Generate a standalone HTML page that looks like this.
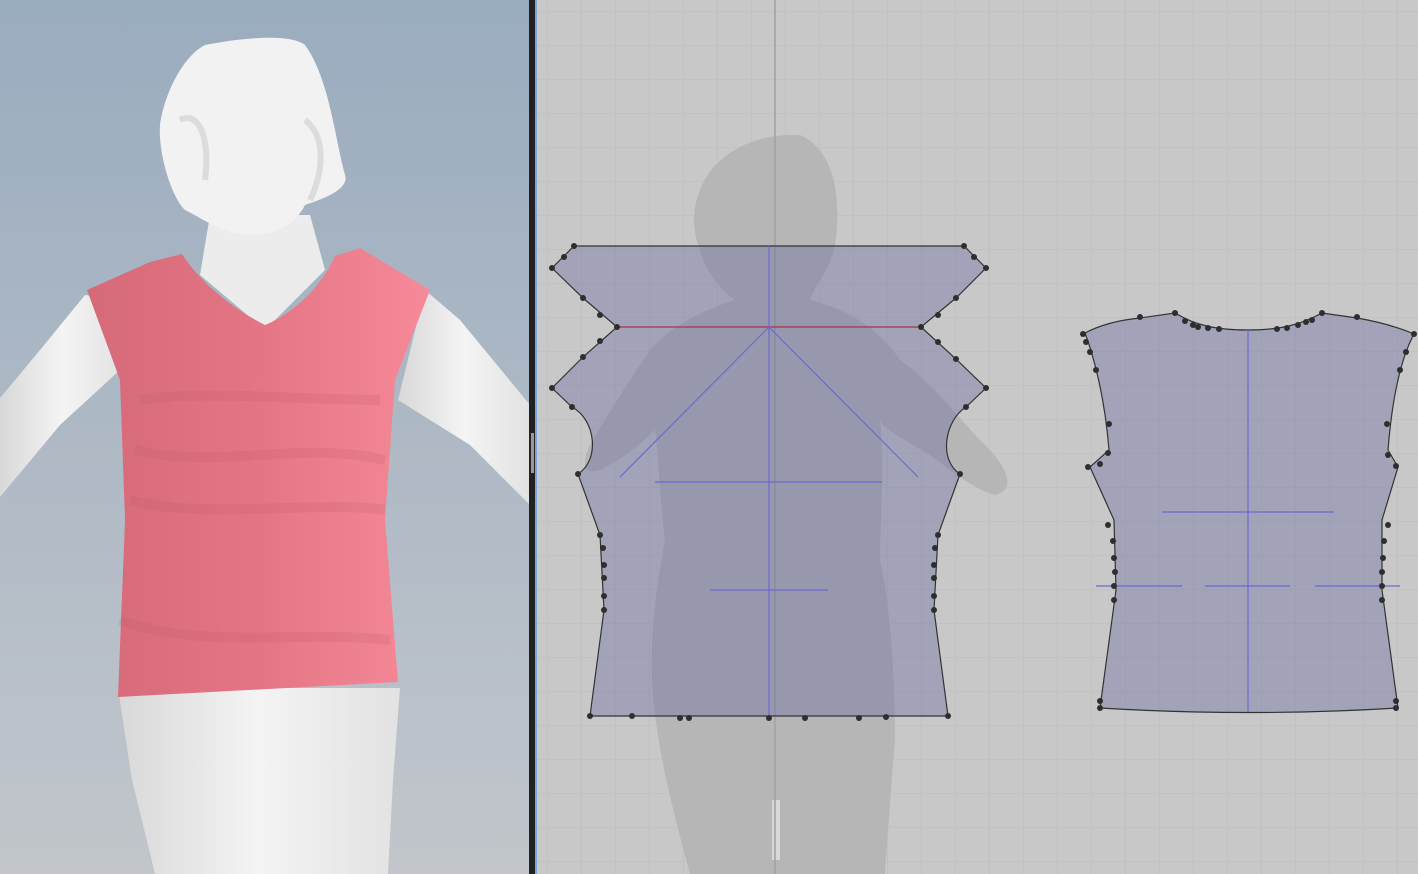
<!DOCTYPE html>
<html><head><meta charset="utf-8"><style>
html,body{margin:0;padding:0;width:1418px;height:874px;overflow:hidden;background:#c8c8c8}
svg{display:block}
</style></head><body>
<svg width="1418" height="874" viewBox="0 0 1418 874" xmlns="http://www.w3.org/2000/svg">
<defs>
<linearGradient id="bg" x1="0" y1="0" x2="0" y2="1"><stop offset="0" stop-color="#9aacbf"/><stop offset="1" stop-color="#c2c6cb"/></linearGradient>
<linearGradient id="shirt" x1="0" y1="0" x2="1" y2="0"><stop offset="0" stop-color="#d56a78"/><stop offset="0.5" stop-color="#e47584"/><stop offset="1" stop-color="#f68a99"/></linearGradient>
<linearGradient id="skin" x1="0" y1="0" x2="1" y2="0"><stop offset="0" stop-color="#d8d8d8"/><stop offset="0.5" stop-color="#f4f4f4"/><stop offset="1" stop-color="#e2e2e2"/></linearGradient>
<pattern id="grid" x="3" y="11" width="34" height="34" patternUnits="userSpaceOnUse"><path d="M0 0H34M0 0V34" stroke="#bdbdbd" stroke-width="1.3" fill="none"/></pattern>
</defs>
<rect x="0" y="0" width="530" height="874" fill="url(#bg)"/>
<path d="M85,295 L125,300 L120,370 L60,425 L0,497 L0,398 L40,350Z" fill="url(#skin)"/>
<path d="M425,290 L460,320 L530,405 L530,505 L470,445 L398,400Z" fill="url(#skin)"/>
<path d="M118,688 L400,688 L393,780 L388,874 L155,874 L132,780Z" fill="url(#skin)"/>
<path d="M210,215 L310,215 L325,270 L265,330 L200,275Z" fill="#ececec"/>
<path d="M205,45 C240,38 290,33 305,45 C330,80 335,140 345,175 C350,190 320,200 305,205 C295,225 275,235 250,235 C225,235 205,220 185,210 C170,195 158,150 160,125 C165,90 185,55 205,45Z" fill="#f2f2f2"/>
<path d="M180,120 C200,110 210,140 205,180 M305,120 C330,140 320,180 310,200" stroke="#dcdcdc" stroke-width="6" fill="none"/>
<path d="M87,290 L150,262 L182,254 C195,275 225,305 265,325 C290,315 320,290 335,256 L360,248 L430,290 L395,380 L385,520 L398,682 L118,697 L125,520 L120,380Z" fill="url(#shirt)"/>
<path d="M140,400 C200,390 300,400 380,400 M135,450 C220,470 300,440 385,460 M130,500 C200,520 320,500 385,510 M120,620 C200,650 300,630 390,640" stroke="#c05a68" stroke-width="10" fill="none" opacity="0.2"/>
<rect x="529" y="0" width="6" height="874" fill="#222"/>
<rect x="535" y="0" width="2" height="874" fill="#7aa6d6"/>
<rect x="531" y="433" width="3" height="40" fill="#999"/>
<rect x="537" y="0" width="881" height="874" fill="#c8c8c8"/>
<rect x="537" y="0" width="881" height="874" fill="url(#grid)"/>
<path d="M700,190 C715,150 760,133 800,135 C835,150 842,200 835,245 C830,270 815,285 810,300 C850,310 880,330 900,360 C930,380 960,420 985,445 C1010,470 1015,490 995,495 C975,490 950,470 930,455 C905,440 885,430 880,420 C885,470 880,520 880,560 C890,600 895,680 895,740 C890,800 885,874 885,874 L690,874 C670,800 655,740 652,680 C650,620 660,570 665,540 C660,500 658,450 655,430 C640,445 620,460 600,470 C585,475 580,465 590,445 C610,410 630,380 650,350 C675,320 720,305 735,300 C720,290 705,270 700,250 C692,230 692,210 700,190Z" fill="#b6b6b6"/>
<rect x="772" y="800" width="8" height="60" fill="#d8d8d8"/>
<line x1="775" y1="0" x2="775" y2="874" stroke="#a0a0a0" stroke-width="1.5"/>
<path d="M574,246 L964,246 L986,268 L956,298 L921,327 L956,359 L986,388 L966,407 C945,420 938,460 960,474 L938,535 L934,610 L948,716 L590,716 L604,610 L600,535 L578,474 C600,460 596,420 572,407 L552,388 L583,357 L617,327 L583,298 L552,268Z" fill="rgba(105,105,160,0.4)" stroke="#333" stroke-width="1.2"/>
<line x1="617" y1="327" x2="921" y2="327" stroke="#b0304a" stroke-width="1.2"/>
<g stroke="#6a6ad0" stroke-width="1.2" fill="none">
<line x1="769" y1="246" x2="769" y2="716"/>
<line x1="769" y1="327" x2="620" y2="477"/>
<line x1="769" y1="327" x2="918" y2="477"/>
<line x1="655" y1="482" x2="882" y2="482"/>
<line x1="710" y1="590" x2="828" y2="590"/>
</g>
<path d="M1085,333 C1100,325 1120,320 1140,318 L1175,313 C1195,325 1215,330 1248,330 C1280,330 1300,325 1322,313 L1357,318 C1380,322 1400,328 1414,334 C1400,360 1392,400 1388,450 L1398,467 L1382,520 L1382,590 L1398,708 C1300,714 1200,714 1100,708 L1116,590 L1114,520 L1090,467 L1109,450 C1105,400 1095,360 1085,333Z" fill="rgba(105,105,160,0.4)" stroke="#333" stroke-width="1.2"/>
<g stroke="#6a6ad0" stroke-width="1.2" fill="none">
<line x1="1248" y1="330" x2="1248" y2="712"/>
<line x1="1162" y1="512" x2="1334" y2="512"/>
<line x1="1096" y1="586" x2="1182" y2="586"/>
<line x1="1205" y1="586" x2="1290" y2="586"/>
<line x1="1315" y1="586" x2="1400" y2="586"/>
</g>
<g fill="#2e2e2e">
<circle cx="574" cy="246" r="3"/><circle cx="564" cy="257" r="3"/><circle cx="552" cy="268" r="3"/><circle cx="583" cy="298" r="3"/><circle cx="600" cy="315" r="3"/><circle cx="617" cy="327" r="3"/><circle cx="600" cy="341" r="3"/><circle cx="583" cy="357" r="3"/><circle cx="552" cy="388" r="3"/><circle cx="572" cy="407" r="3"/><circle cx="578" cy="474" r="3"/>
<circle cx="600" cy="535" r="3"/><circle cx="603" cy="548" r="3"/><circle cx="604" cy="565" r="3"/><circle cx="604" cy="578" r="3"/><circle cx="604" cy="596" r="3"/><circle cx="604" cy="610" r="3"/><circle cx="590" cy="716" r="3"/><circle cx="632" cy="716" r="3"/><circle cx="680" cy="718" r="3"/><circle cx="689" cy="718" r="3"/><circle cx="769" cy="718" r="3"/><circle cx="805" cy="718" r="3"/><circle cx="859" cy="718" r="3"/><circle cx="886" cy="717" r="3"/><circle cx="948" cy="716" r="3"/>
<circle cx="964" cy="246" r="3"/><circle cx="974" cy="257" r="3"/><circle cx="986" cy="268" r="3"/><circle cx="956" cy="298" r="3"/><circle cx="938" cy="315" r="3"/><circle cx="921" cy="327" r="3"/><circle cx="938" cy="342" r="3"/><circle cx="956" cy="359" r="3"/><circle cx="986" cy="388" r="3"/><circle cx="966" cy="407" r="3"/><circle cx="960" cy="474" r="3"/>
<circle cx="938" cy="535" r="3"/><circle cx="935" cy="548" r="3"/><circle cx="934" cy="565" r="3"/><circle cx="934" cy="578" r="3"/><circle cx="934" cy="596" r="3"/><circle cx="934" cy="610" r="3"/>
<circle cx="1083" cy="334" r="3"/><circle cx="1086" cy="342" r="3"/><circle cx="1090" cy="352" r="3"/><circle cx="1096" cy="370" r="3"/><circle cx="1109" cy="424" r="3"/><circle cx="1108" cy="453" r="3"/><circle cx="1100" cy="464" r="3"/><circle cx="1088" cy="467" r="3"/><circle cx="1140" cy="317" r="3"/><circle cx="1175" cy="313" r="3"/><circle cx="1185" cy="321" r="3"/><circle cx="1193" cy="325" r="3"/><circle cx="1198" cy="327" r="3"/><circle cx="1208" cy="328" r="3"/><circle cx="1219" cy="329" r="3"/>
<circle cx="1277" cy="329" r="3"/><circle cx="1287" cy="328" r="3"/><circle cx="1298" cy="325" r="3"/><circle cx="1306" cy="322" r="3"/><circle cx="1312" cy="320" r="3"/><circle cx="1322" cy="313" r="3"/><circle cx="1357" cy="317" r="3"/><circle cx="1414" cy="334" r="3"/><circle cx="1406" cy="352" r="3"/><circle cx="1400" cy="370" r="3"/><circle cx="1387" cy="424" r="3"/><circle cx="1388" cy="455" r="3"/><circle cx="1396" cy="466" r="3"/>
<circle cx="1108" cy="525" r="3"/><circle cx="1113" cy="541" r="3"/><circle cx="1114" cy="558" r="3"/><circle cx="1115" cy="572" r="3"/><circle cx="1114" cy="586" r="3"/><circle cx="1114" cy="600" r="3"/><circle cx="1100" cy="701" r="3"/><circle cx="1100" cy="708" r="3"/>
<circle cx="1388" cy="525" r="3"/><circle cx="1384" cy="541" r="3"/><circle cx="1383" cy="558" r="3"/><circle cx="1382" cy="572" r="3"/><circle cx="1382" cy="586" r="3"/><circle cx="1382" cy="600" r="3"/><circle cx="1396" cy="701" r="3"/><circle cx="1396" cy="708" r="3"/>
</g>
</svg>
</body></html>
